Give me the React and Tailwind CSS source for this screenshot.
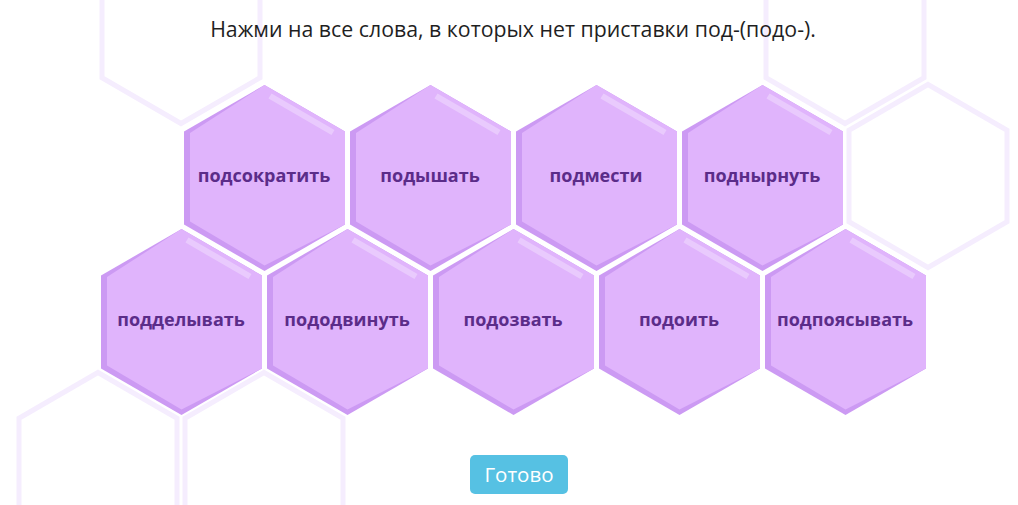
import React, { useState } from "react";

const rowOne = ["подсократить", "подышать", "подмести", "поднырнуть"];
const rowTwo = ["подделывать", "пододвинуть", "подозвать", "подоить", "подпоясывать"];

// pointy-top hexagon, 161 x 186
const HEX = "80.5,0 161,46.5 161,139.5 80.5,186 0,139.5 0,46.5";
const FACE = "80.5,0 161,46.5 161,139.5 80.5,180.5 6,136.5 6,48";

// background outlines: [cx, cy]
const outlines = [
  [181, 32],
  [845, 32],
  [928, 176],
  [98, 464],
  [264, 464],
];

function hexPoints(cx, cy, w = 158, h = 183) {
  const hw = w / 2;
  const q = h / 4;
  return [
    [cx, cy - h / 2],
    [cx + hw, cy - q],
    [cx + hw, cy + q],
    [cx, cy + h / 2],
    [cx - hw, cy + q],
    [cx - hw, cy - q],
  ]
    .map((p) => p.join(","))
    .join(" ");
}

function Cell({ word, picked, onPick }) {
  return (
    <button
      onClick={onPick}
      className="relative flex h-[186px] w-[161px] shrink-0 items-center justify-center pb-[6px]"
    >
      <svg className="absolute inset-0" width="161" height="186" viewBox="0 0 161 186">
        <polygon points={HEX} fill={picked ? "#b47be6" : "#cc9af3"} />
        <polygon points={FACE} fill={picked ? "#c48ff0" : "#e0b4fc"} />
        <line x1="86" y1="11" x2="149" y2="47.5" stroke="#ffffff" strokeOpacity="0.3" strokeWidth="6" />
      </svg>
      <span className="relative font-['Open_Sans',sans-serif] text-[18px] font-bold text-[#5b2c89]">
        {word}
      </span>
    </button>
  );
}

export default function App() {
  const [picked, setPicked] = useState({});
  const toggle = (w) => setPicked((p) => ({ ...p, [w]: !p[w] }));

  return (
    <div className="relative h-[505px] w-full overflow-hidden bg-white">
      <svg className="absolute inset-0" width="1018" height="505" viewBox="0 0 1018 505">
        {outlines.map(([x, y]) => (
          <polygon
            key={`${x}-${y}`}
            points={hexPoints(x, y)}
            fill="none"
            stroke="#f5edfe"
            strokeWidth="5"
          />
        ))}
      </svg>

      <div className="relative flex flex-col items-center pl-[8px] pt-[15px]">
        <p className="font-['Open_Sans',sans-serif] text-[21.3px] leading-[28px] text-[#1f1f1f]">
          Нажми на все слова, в которых нет приставки под-(подо-).
        </p>

        <div className="mt-[42px] flex gap-[5px]">
          {rowOne.map((w) => (
            <Cell key={w} word={w} picked={picked[w]} onPick={() => toggle(w)} />
          ))}
        </div>
        <div className="mt-[-42px] flex gap-[5px]">
          {rowTwo.map((w) => (
            <Cell key={w} word={w} picked={picked[w]} onPick={() => toggle(w)} />
          ))}
        </div>

        <button className="ml-[12px] mt-[40px] h-[39px] w-[98px] rounded-[5px] bg-[#56c1e3] font-['Open_Sans',sans-serif] text-[20.5px] text-white">
          Готово
        </button>
      </div>
    </div>
  );
}
